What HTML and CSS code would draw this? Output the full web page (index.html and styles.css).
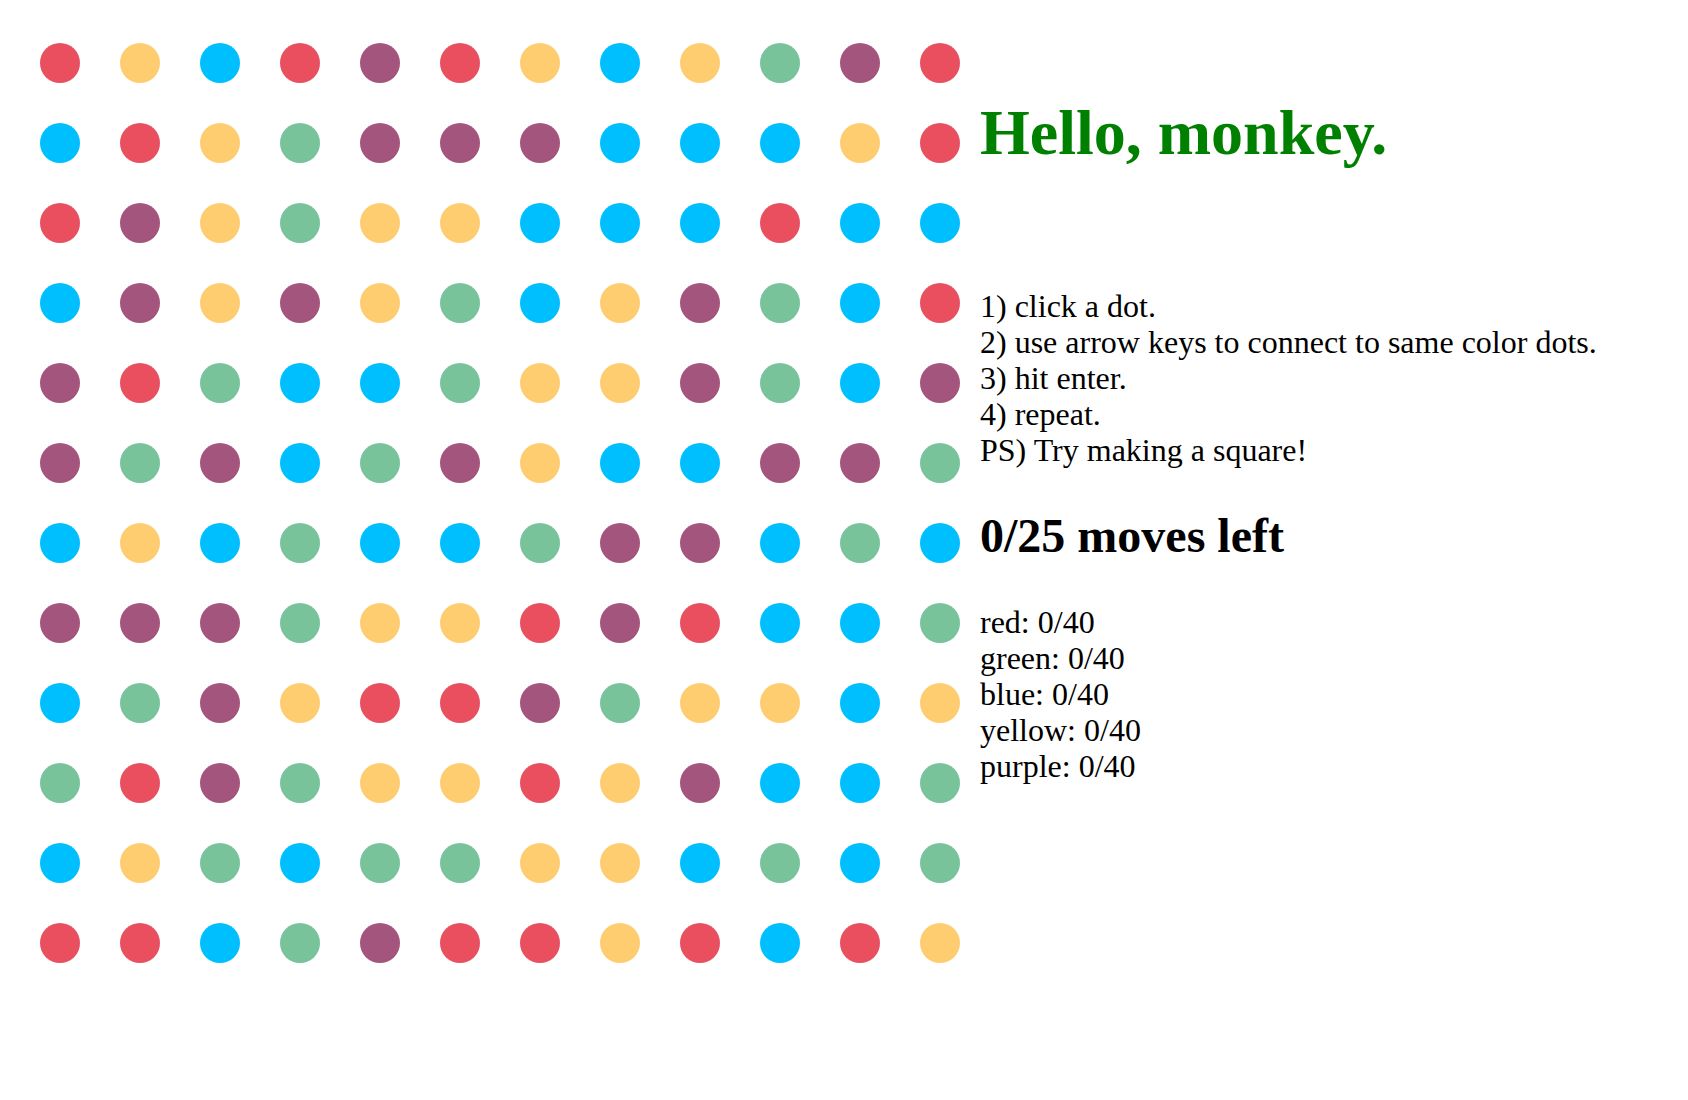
FILE: index.html
```html
<!DOCTYPE html>
<html>
<head>
<meta charset="utf-8">
<title>Dots</title>
<link rel="stylesheet" href="styles.css">
</head>
<body>
<div class="page">
  <div class="board">
    <span class="dot r"></span><span class="dot y"></span><span class="dot b"></span><span class="dot r"></span><span class="dot p"></span><span class="dot r"></span><span class="dot y"></span><span class="dot b"></span><span class="dot y"></span><span class="dot g"></span><span class="dot p"></span><span class="dot r"></span>
    <span class="dot b"></span><span class="dot r"></span><span class="dot y"></span><span class="dot g"></span><span class="dot p"></span><span class="dot p"></span><span class="dot p"></span><span class="dot b"></span><span class="dot b"></span><span class="dot b"></span><span class="dot y"></span><span class="dot r"></span>
    <span class="dot r"></span><span class="dot p"></span><span class="dot y"></span><span class="dot g"></span><span class="dot y"></span><span class="dot y"></span><span class="dot b"></span><span class="dot b"></span><span class="dot b"></span><span class="dot r"></span><span class="dot b"></span><span class="dot b"></span>
    <span class="dot b"></span><span class="dot p"></span><span class="dot y"></span><span class="dot p"></span><span class="dot y"></span><span class="dot g"></span><span class="dot b"></span><span class="dot y"></span><span class="dot p"></span><span class="dot g"></span><span class="dot b"></span><span class="dot r"></span>
    <span class="dot p"></span><span class="dot r"></span><span class="dot g"></span><span class="dot b"></span><span class="dot b"></span><span class="dot g"></span><span class="dot y"></span><span class="dot y"></span><span class="dot p"></span><span class="dot g"></span><span class="dot b"></span><span class="dot p"></span>
    <span class="dot p"></span><span class="dot g"></span><span class="dot p"></span><span class="dot b"></span><span class="dot g"></span><span class="dot p"></span><span class="dot y"></span><span class="dot b"></span><span class="dot b"></span><span class="dot p"></span><span class="dot p"></span><span class="dot g"></span>
    <span class="dot b"></span><span class="dot y"></span><span class="dot b"></span><span class="dot g"></span><span class="dot b"></span><span class="dot b"></span><span class="dot g"></span><span class="dot p"></span><span class="dot p"></span><span class="dot b"></span><span class="dot g"></span><span class="dot b"></span>
    <span class="dot p"></span><span class="dot p"></span><span class="dot p"></span><span class="dot g"></span><span class="dot y"></span><span class="dot y"></span><span class="dot r"></span><span class="dot p"></span><span class="dot r"></span><span class="dot b"></span><span class="dot b"></span><span class="dot g"></span>
    <span class="dot b"></span><span class="dot g"></span><span class="dot p"></span><span class="dot y"></span><span class="dot r"></span><span class="dot r"></span><span class="dot p"></span><span class="dot g"></span><span class="dot y"></span><span class="dot y"></span><span class="dot b"></span><span class="dot y"></span>
    <span class="dot g"></span><span class="dot r"></span><span class="dot p"></span><span class="dot g"></span><span class="dot y"></span><span class="dot y"></span><span class="dot r"></span><span class="dot y"></span><span class="dot p"></span><span class="dot b"></span><span class="dot b"></span><span class="dot g"></span>
    <span class="dot b"></span><span class="dot y"></span><span class="dot g"></span><span class="dot b"></span><span class="dot g"></span><span class="dot g"></span><span class="dot y"></span><span class="dot y"></span><span class="dot b"></span><span class="dot g"></span><span class="dot b"></span><span class="dot g"></span>
    <span class="dot r"></span><span class="dot r"></span><span class="dot b"></span><span class="dot g"></span><span class="dot p"></span><span class="dot r"></span><span class="dot r"></span><span class="dot y"></span><span class="dot r"></span><span class="dot b"></span><span class="dot r"></span><span class="dot y"></span>
  </div>
  <div class="panel">
    <h1 class="greeting">Hello, monkey.</h1>
    <div class="steps">
      <div>1) click a dot.</div>
      <div>2) use arrow keys to connect to same color dots.</div>
      <div>3) hit enter.</div>
      <div>4) repeat.</div>
      <div>PS) Try making a square!</div>
    </div>
    <h2 class="moves">0/25 moves left</h2>
    <div class="counts">
      <div>red: 0/40</div>
      <div>green: 0/40</div>
      <div>blue: 0/40</div>
      <div>yellow: 0/40</div>
      <div>purple: 0/40</div>
    </div>
  </div>
</div>
</body>
</html>
```
FILE: styles.css
```css
html, body {
  margin: 0;
  padding: 0;
  background: #ffffff;
}
body {
  font-family: "Liberation Serif", "Times New Roman", serif;
  font-size: 32px;
  color: #000000;
}
.page {
  display: flex;
  align-items: flex-start;
}
.board {
  display: grid;
  grid-template-columns: repeat(12, 80px);
  grid-auto-rows: 80px;
  padding: 23px 0 0 20px;
  flex: none;
}
.dot {
  display: block;
  width: 40px;
  height: 40px;
  margin: 20px;
  border-radius: 50%;
}
.r { background: #e94f5f; }
.y { background: #fecd6f; }
.b { background: #00bfff; }
.g { background: #78c39a; }
.p { background: #a4557d; }
.panel {
  flex: 1;
}
.greeting {
  margin: 96px 0 0 0;
  font-size: 64px;
  line-height: 74px;
  font-weight: bold;
  color: #008000;
}
.steps {
  margin-top: 118px;
  line-height: 36px;
}
.moves {
  margin: 40px 0 0 0;
  font-size: 48px;
  line-height: 55px;
  font-weight: bold;
}
.counts {
  margin-top: 41px;
  line-height: 36px;
}
```
